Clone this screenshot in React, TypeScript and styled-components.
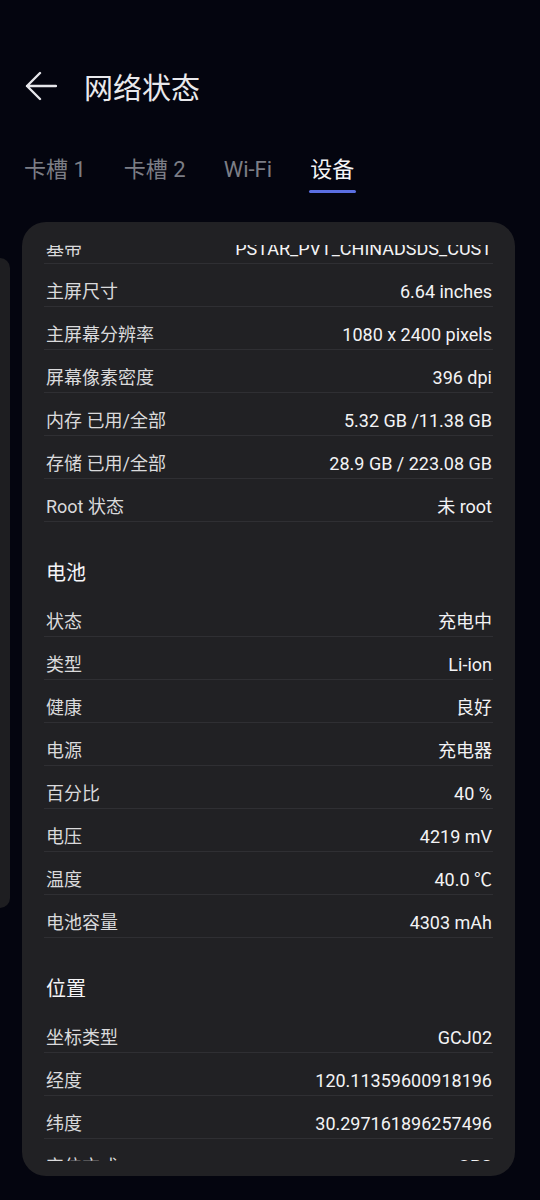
import React from "react";
import styled, { createGlobalStyle } from "styled-components";

const Global = createGlobalStyle`
  html, body { margin: 0; padding: 0; background: #04050f; }
  body { font-family: Roboto, "Noto Sans CJK SC", sans-serif; -webkit-font-smoothing: antialiased; }
  * { box-sizing: border-box; }
`;

const Screen = styled.div`
  width: 540px;
  height: 1200px;
  background: #04050f;
  overflow: hidden;
  display: flex;
  flex-direction: column;
`;

const Header = styled.header`
  margin-top: 60px;
  height: 52px;
  display: flex;
  align-items: center;
  padding-left: 25px;
  gap: 27px;
`;

const Title = styled.h1`
  margin: 0;
  font-size: 29px;
  font-weight: 400;
  line-height: 40px;
  color: #e9e9ec;
  font-family: "Noto Sans CJK SC", sans-serif;
`;

const Tabs = styled.nav`
  margin-top: 42px;
  display: flex;
  gap: 38px;
  padding-left: 24px;
`;

const Tab = styled.div<{ $active?: boolean }>`
  display: flex;
  flex-direction: column;
  align-items: center;
  font-size: 22px;
  line-height: 32px;
  color: ${(p) => (p.$active ? "#f4f4f6" : "#7c7e86")};
  &::after {
    content: "";
    display: block;
    margin-top: 4px;
    width: calc(100% + 3px);
    height: 3px;
    border-radius: 2px;
    background: ${(p) => (p.$active ? "#5b6fe2" : "transparent")};
  }
`;

const Pager = styled.div`
  margin-top: 29px;
  display: flex;
  gap: 12px;
  align-items: flex-start;
`;

const PrevCard = styled.div`
  flex: 0 0 10px;
  height: 650px;
  margin-top: 36px;
  background: #1e1e21;
  border-radius: 0 14px 14px 0;
`;

const Card = styled.section`
  width: 493px;
  height: 954px;
  background: #212124;
  border-radius: 24px;
  padding: 23px 22px 15px 22px;
  display: flex;
  flex-direction: column;
`;

const Viewport = styled.div`
  flex: 1;
  overflow: hidden;
`;

const List = styled.div`
  margin-top: -24px;
  display: flex;
  flex-direction: column;
`;

const Row = styled.div`
  height: 43px;
  display: flex;
  justify-content: space-between;
  align-items: flex-start;
  padding: 17px 0 3px 0;
  border-bottom: 1px solid #2f2f33;
  font-size: 18px;
  line-height: 22px;
`;

const Label = styled.span`
  color: #dadadc;
  padding-left: 2px;
`;

const Value = styled.span`
  color: #f3f3f5;
  text-align: right;
  padding-right: 1px;
`;

const SectionTitle = styled.div`
  height: 72px;
  padding: 38px 0 8px 2px;
  font-size: 20px;
  line-height: 26px;
  color: #f5f5f7;
`;

const BackArrow = () => (
  <svg width="32" height="30" viewBox="0 0 32 30" fill="none">
    <path d="M2 15 H31 M15 2 L2 15 L15 28" stroke="#e6e6ea" strokeWidth="2.4" strokeLinecap="round" strokeLinejoin="round" />
  </svg>
);

type Item = { label: string; value: string };
type Section = { title?: string; items: Item[] };

const sections: Section[] = [
  {
    items: [
      { label: "基带", value: "PSTAR_PVT_CHINADSDS_CUST" },
      { label: "主屏尺寸", value: "6.64 inches" },
      { label: "主屏幕分辨率", value: "1080 x 2400 pixels" },
      { label: "屏幕像素密度", value: "396 dpi" },
      { label: "内存 已用/全部", value: "5.32 GB /11.38 GB" },
      { label: "存储 已用/全部", value: "28.9 GB / 223.08 GB" },
      { label: "Root 状态", value: "未 root" },
    ],
  },
  {
    title: "电池",
    items: [
      { label: "状态", value: "充电中" },
      { label: "类型", value: "Li-ion" },
      { label: "健康", value: "良好" },
      { label: "电源", value: "充电器" },
      { label: "百分比", value: "40 %" },
      { label: "电压", value: "4219 mV" },
      { label: "温度", value: "40.0 ℃" },
      { label: "电池容量", value: "4303 mAh" },
    ],
  },
  {
    title: "位置",
    items: [
      { label: "坐标类型", value: "GCJ02" },
      { label: "经度", value: "120.11359600918196" },
      { label: "纬度", value: "30.297161896257496" },
      { label: "定位方式", value: "GPS" },
    ],
  },
];

const tabs = ["卡槽 1", "卡槽 2", "Wi-Fi", "设备"];

export default function App() {
  return (
    <Screen>
      <Global />
      <Header>
        <BackArrow />
        <Title>网络状态</Title>
      </Header>
      <Tabs>
        {tabs.map((t) => (
          <Tab key={t} $active={t === "设备"}>
            {t}
          </Tab>
        ))}
      </Tabs>
      <Pager>
        <PrevCard />
        <Card>
          <Viewport>
            <List>
              {sections.map((s, i) => (
                <React.Fragment key={i}>
                  {s.title && <SectionTitle>{s.title}</SectionTitle>}
                  {s.items.map((it) => (
                    <Row key={it.label}>
                      <Label>{it.label}</Label>
                      <Value>{it.value}</Value>
                    </Row>
                  ))}
                </React.Fragment>
              ))}
            </List>
          </Viewport>
        </Card>
      </Pager>
    </Screen>
  );
}
